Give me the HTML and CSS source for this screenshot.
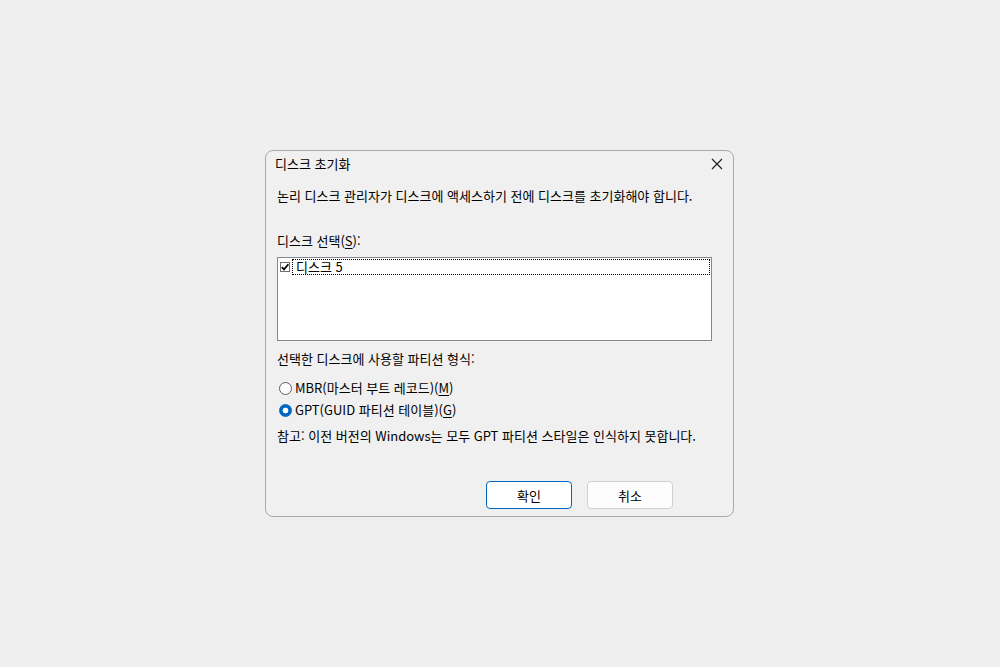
FILE: index.html
```html
<!DOCTYPE html>
<html lang="ko">
<head>
<meta charset="utf-8">
<title>디스크 초기화</title>
<link rel="stylesheet" href="styles.css">
</head>
<body>
	<div class="dialog">
		<!-- title bar -->
		<div class="titlebar">
			<span class="title">디스크 초기화</span>
			<svg class="close" width="12" height="12" viewBox="0 0 12 12">
				<path d="M1 1 L11 11 M11 1 L1 11" stroke="#1a1a1a" stroke-width="1.1" fill="none"/>
			</svg>
		</div>
		<div class="content">
			<p class="intro">논리 디스크 관리자가 디스크에 액세스하기 전에 디스크를 초기화해야 합니다.</p>
			<p class="label">디스크 선택(<u>S</u>):</p>
			<div class="listbox">
				<div class="row">
					<span class="check">
						<svg width="8" height="8" viewBox="0 0 8 8">
							<path d="M0.8 4.2 L3 6.4 L7.4 1.2" stroke="#000" stroke-width="1.7" fill="none"/>
						</svg>
					</span>
					<span class="item">디스크 5</span>
				</div>
			</div>
			<p class="label2">선택한 디스크에 사용할 파티션 형식:</p>
			<div class="option option-mbr">
				<span class="radio"></span>
				<span>MBR(마스터 부트 레코드)(<u>M</u>)</span>
			</div>
			<div class="option option-gpt">
				<span class="radio checked"></span>
				<span>GPT(GUID 파티션 테이블)(<u>G</u>)</span>
			</div>
			<p class="note">참고: 이전 버전의 Windows는 모두 GPT 파티션 스타일은 인식하지 못합니다.</p>
			<div class="buttons">
				<button class="btn btn-default">확인</button>
				<button class="btn">취소</button>
			</div>
		</div>
	</div>
</body>
</html>
```

FILE: styles.css
```css
html, body {
	margin: 0;
	height: 100%;
}
body {
	background: #efefef;
	display: flex;
	align-items: center;
	justify-content: center;
	padding-right: 1px;
	box-sizing: border-box;
	font-family: "Noto Sans CJK KR", sans-serif;
	font-size: 13px;
	color: #000;
}
p { margin: 0; }
u { text-underline-offset: 2px; }

.dialog {
	width: 469px;
	height: 367px;
	box-sizing: border-box;
	border: 1px solid #a9a9a9;
	border-radius: 8px;
	background: #f0f0f0;
}
.titlebar {
	height: 25px;
	display: flex;
	align-items: center;
	justify-content: space-between;
	padding: 0 10px 0 9px;
	line-height: 16px;
}

.content {
	padding: 0 0 0 11px;
	line-height: 16px;
}
.intro { margin-top: 12px; }
.label { margin-top: 29px; }

.listbox {
	margin-top: 8px;
	width: 435px;
	height: 84px;
	box-sizing: border-box;
	border: 1px solid #828790;
	background: #fff;
	padding: 1px 1px 0 2px;
}
.row {
	display: flex;
	align-items: center;
	height: 16px;
}
.check {
	width: 8px;
	height: 8px;
	border: 1px solid #707070;
	display: flex;
	align-items: center;
	justify-content: center;
	background: #fff;
	margin-right: 2px;
}
.item {
	flex: 1;
	height: 14px;
	line-height: 14px;
	border: 1px dotted #000;
	padding-left: 3px;
}

.label2 { margin-top: 10px; }
.option {
	display: flex;
	align-items: center;
	height: 16px;
	padding-left: 2px;
}
.option-mbr { margin-top: 13px; }
.option-gpt { margin-top: 6px; }
.radio {
	width: 11px;
	height: 11px;
	border: 1px solid #5f5f5f;
	border-radius: 50%;
	margin-right: 3px;
	background: #fff;
}
.radio.checked {
	border-color: #0067c0;
	background: radial-gradient(circle, #fff 0, #fff 2.6px, #0067c0 3.2px);
}
.note { margin-top: 10px; }

.buttons {
	margin-top: 37px;
	display: flex;
	justify-content: flex-end;
	gap: 15px;
	padding-right: 60px;
}
.btn {
	width: 86px;
	height: 28px;
	border: 1px solid #d0d0d0;
	border-radius: 4px;
	background: #fdfdfd;
	font-family: "Noto Sans CJK KR", sans-serif;
	font-size: 13px;
	color: #000;
	padding: 0;
}
.btn-default {
	border-color: #0067c0;
	background: #fff;
}
```
